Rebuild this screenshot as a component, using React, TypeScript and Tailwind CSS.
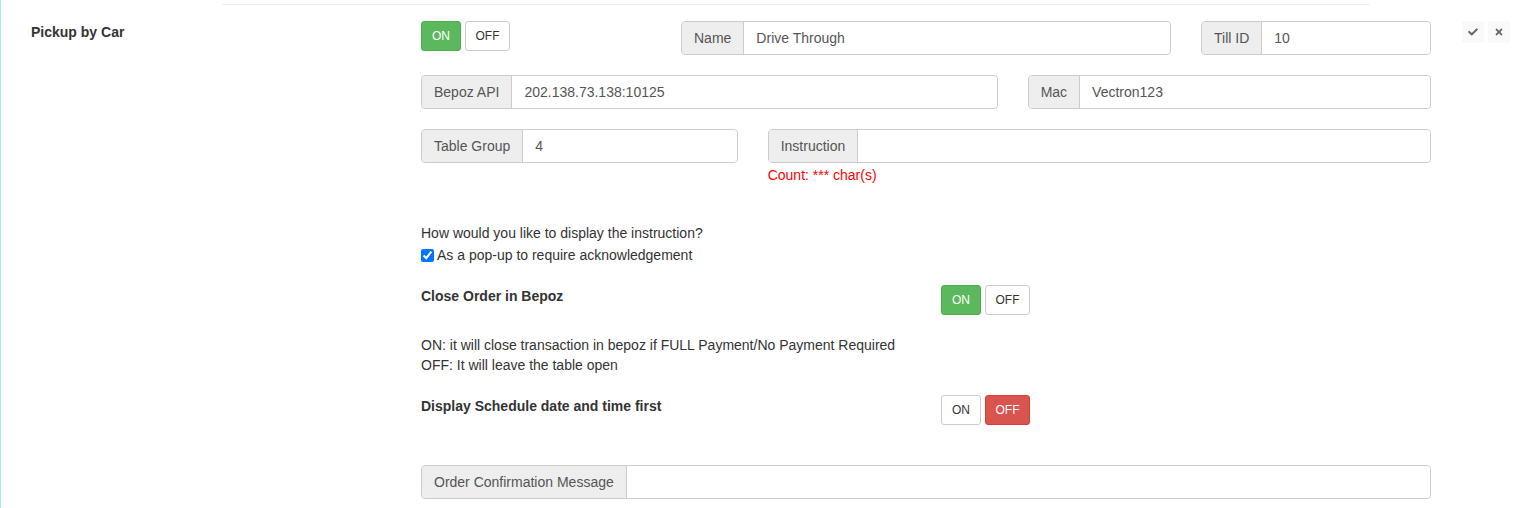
import { FaCheck, FaTimes } from 'react-icons/fa';

function Toggle({ on }: { on: boolean }) {
  return (
    <div className="flex gap-[4px]">
      <button
        className={
          on
            ? 'h-[30px] w-[40px] rounded-[3px] border border-[#4cae4c] bg-[#5cb85c] text-[12px] text-white'
            : 'h-[30px] w-[40px] rounded-[3px] border border-[#ccc] bg-white text-[12px] text-[#333]'
        }
      >
        ON
      </button>
      <button
        className={
          on
            ? 'h-[30px] w-[45px] rounded-[3px] border border-[#ccc] bg-white text-[12px] text-[#333]'
            : 'h-[30px] w-[45px] rounded-[3px] border border-[#d43f3a] bg-[#d9534f] text-[12px] text-white'
        }
      >
        OFF
      </button>
    </div>
  );
}

function Field({ label, value, className }: { label: string; value?: string; className?: string }) {
  return (
    <div className={'flex h-[34px] rounded-[4px] border border-[#ccc] ' + (className || '')}>
      <span className="flex items-center whitespace-nowrap rounded-l-[3px] border-r border-[#ccc] bg-[#eee] px-[12px] text-[14px] text-[#555]">
        {label}
      </span>
      <input
        type="text"
        defaultValue={value}
        className="min-w-0 flex-1 rounded-r-[4px] bg-white px-[12px] text-[14px] text-[#555] outline-none"
      />
    </div>
  );
}

export default function App() {
  return (
    <div className="h-[508px] border-l border-[#b2e7f0] bg-white font-['Liberation_Sans',Arial,sans-serif] text-[14px] text-[#333]">
      <div className="ml-[221px] w-[1148px] pt-[4px]">
        <div className="border-t border-[#eee]" />
      </div>
      <div className="flex pt-[16px]">
        <div className="w-[420px] pl-[30px] pt-[1px]">
          <h3 className="text-[14px] font-bold leading-[20px]">Pickup by Car</h3>
        </div>

        <div className="w-[1010px]">
          <div className="grid grid-cols-12 gap-x-[30px] gap-y-[20px]">
            <div className="col-span-3">
              <Toggle on={true} />
            </div>
            <Field className="col-span-6" label="Name" value="Drive Through" />
            <Field className="col-span-3" label="Till ID" value="10" />

            <Field className="col-span-7" label="Bepoz API" value="202.138.73.138:10125" />
            <Field className="col-span-5" label="Mac" value="Vectron123" />

            <Field className="col-span-4" label="Table Group" value="4" />
            <div className="col-span-8">
              <Field label="Instruction" />
              <p className="mt-[2px] leading-[20px] text-[#f00]">Count: *** char(s)</p>
            </div>
          </div>

          <div className="mt-[38px] leading-[20px]">
            <p>How would you like to display the instruction?</p>
            <label className="mt-[2px] flex items-center">
              <input type="checkbox" defaultChecked className="mr-[3px] h-[13px] w-[13px] accent-[#0075ff]" />
              As a pop-up to require acknowledgement
            </label>
          </div>

          <div className="mt-[20px] grid grid-cols-12 gap-x-[30px]">
            <h4 className="col-span-6 pt-[1px] font-bold leading-[20px]">Close Order in Bepoz</h4>
            <div className="col-span-6">
              <Toggle on={true} />
            </div>
          </div>

          <div className="mt-[20px] leading-[20px]">
            <p>ON: it will close transaction in bepoz if FULL Payment/No Payment Required</p>
            <p>OFF: It will leave the table open</p>
          </div>

          <div className="mt-[20px] grid grid-cols-12 gap-x-[30px]">
            <h4 className="col-span-6 pt-[1px] font-bold leading-[20px]">Display Schedule date and time first</h4>
            <div className="col-span-6">
              <Toggle on={false} />
            </div>
          </div>

          <Field className="mt-[40px]" label="Order Confirmation Message" />
        </div>

        <div className="ml-[31px] flex gap-[4px]">
          <button className="flex h-[22px] w-[22px] items-center justify-center rounded-[3px] bg-[#f9f9f9] text-[#666]">
            <FaCheck className="h-[10px] w-[10px]" />
          </button>
          <button className="flex h-[22px] w-[22px] items-center justify-center rounded-[3px] bg-[#f9f9f9] text-[#666]">
            <FaTimes className="h-[10px] w-[10px]" />
          </button>
        </div>
      </div>
    </div>
  );
}
